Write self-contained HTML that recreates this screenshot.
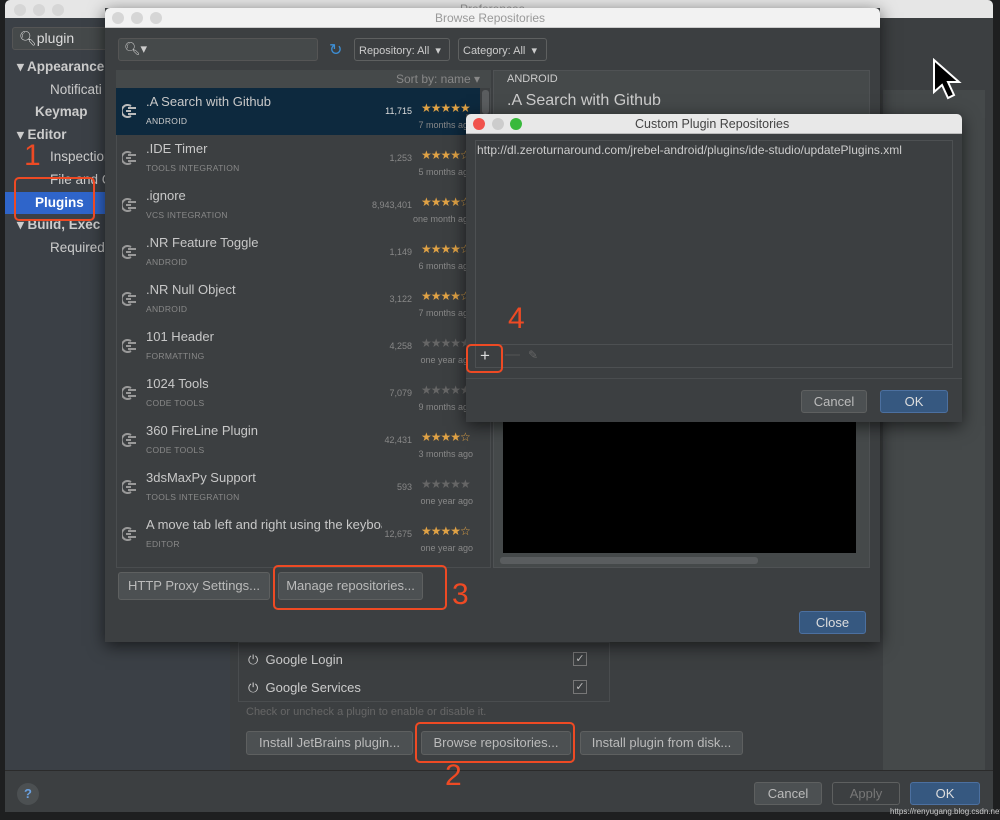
<!DOCTYPE html>
<html><head><style>
*{margin:0;padding:0;box-sizing:border-box}
body{width:1000px;height:820px;background:#1e1f20;position:relative;overflow:hidden;font-family:"Liberation Sans",sans-serif;color:#bbbbbb;font-size:13px}
.a{position:absolute;white-space:nowrap}
.btn{position:absolute;background:#4c5052;border:1px solid #5e6060;border-radius:3px;color:#bbb;font-size:13px;text-align:center;white-space:nowrap}
.blue{background:#365880;border-color:#4c70a0;color:#ddd}
.red{position:absolute;border:2px solid #ee4a24;border-radius:5px}
.num{position:absolute;color:#ee4a24;font-size:30px;font-weight:300}
.row{position:absolute;left:116px;width:364px;height:47px}
.row .t{position:absolute;left:30px;top:6px;font-size:13px;color:#c8c8c8;white-space:nowrap}
.row .c{position:absolute;left:30px;top:28px;font-size:8.5px;color:#888;letter-spacing:.3px;white-space:nowrap}
.row .n{position:absolute;right:68px;top:18px;font-size:9px;color:#888}
.row .s{position:absolute;left:305px;top:13px;font-size:12px;letter-spacing:-1px;color:#e0a245;white-space:nowrap}
.row .s.g{color:#666}
.row .d{position:absolute;right:7px;top:32px;font-size:9px;color:#888;white-space:nowrap}
.plug{position:absolute;left:6px;top:16px;width:14px;height:14px}
.dots span{position:absolute;width:12px;height:12px;border-radius:6px;background:#d6d6d6;top:4px}
</style></head><body>
<div class="a" style="left:5px;top:0;width:988px;height:18px;background:#e6e6e6;border-radius:5px 5px 0 0"></div>
<div class="a" style="left:460px;top:2px;color:#999;font-size:12px">Preferences</div>
<div class="a" style="left:5px;top:18px;width:225px;height:752px;background:#3b4046"></div>
<div class="a" style="left:230px;top:18px;width:763px;height:752px;background:#3c3f41"></div>
<div class="a" style="left:883px;top:90px;width:102px;height:680px;background:#45494a"></div>
<div class="a" style="left:5px;top:770px;width:988px;height:42px;background:#3c3f41;border-top:1px solid #2b2b2b"></div>
<div class="dots"><span style="left:14px;top:4px"></span><span style="left:33px"></span><span style="left:52px"></span></div>
<div class="a" style="left:12px;top:27px;width:100px;height:23px;border:1px solid #555;background:#45494a;border-radius:3px;color:#ddd;font-size:14px;padding:2px 6px">🔍︎plugin</div>
<div class="a" style="left:17px;top:56px;font-size:13.5px;line-height:22.6px;font-weight:bold;color:#ccc">
▾ Appearance<br><span style="font-weight:normal;padding-left:33px">Notificati</span><br><span style="padding-left:18px">Keymap</span><br>▾ Editor<br><span style="font-weight:normal;padding-left:33px">Inspection</span><br><span style="font-weight:normal;padding-left:33px">File and C</span></div>
<div class="a" style="left:5px;top:192px;width:225px;height:22px;background:#2f65ca"></div>
<div class="a" style="left:35px;top:195px;font-weight:bold;color:#fff;font-size:13.5px">Plugins</div>
<div class="a" style="left:17px;top:214px;font-size:13.5px;line-height:22.6px;font-weight:bold;color:#ccc">▾ Build, Exec<br><span style="font-weight:normal;padding-left:33px">Required</span></div>
<div class="a" style="left:238px;top:642px;width:372px;height:60px;border:1px solid #4a4d4f;background:#3c3f41"></div>
<div class="a" style="left:248px;top:652px;color:#ccc">⏻&nbsp; Google Login</div>
<div class="a" style="left:248px;top:680px;color:#ccc">⏻&nbsp; Google Services</div>
<div class="a" style="left:573px;top:652px;width:14px;height:14px;border:1px solid #777;font-size:11px;line-height:12px;text-align:center">✓</div>
<div class="a" style="left:573px;top:680px;width:14px;height:14px;border:1px solid #777;font-size:11px;line-height:12px;text-align:center">✓</div>
<div class="a" style="left:246px;top:706px;font-size:11px;color:#666">Check or uncheck a plugin to enable or disable it.</div>
<div class="btn" style="left:246px;top:731px;width:167px;height:24px;line-height:22px">Install JetBrains plugin...</div>
<div class="btn" style="left:421px;top:731px;width:150px;height:24px;line-height:22px">Browse repositories...</div>
<div class="btn" style="left:580px;top:731px;width:163px;height:24px;line-height:22px">Install plugin from disk...</div>
<div class="a" style="left:17px;top:783px;width:22px;height:22px;border-radius:11px;background:#4c5052;color:#6aa0e0;font-weight:bold;text-align:center;line-height:22px">?</div>
<div class="btn" style="left:754px;top:782px;width:68px;height:23px;line-height:21px">Cancel</div>
<div class="btn" style="left:832px;top:782px;width:68px;height:23px;line-height:21px;background:#3c3f41;color:#777">Apply</div>
<div class="btn blue" style="left:910px;top:782px;width:70px;height:23px;line-height:21px">OK</div>
<div class="a" style="left:890px;top:807px;font-size:8px;color:#ccc">https://renyugang.blog.csdn.net</div>

<div class="a" style="left:105px;top:8px;width:775px;height:634px;background:#3c3f41;box-shadow:0 4px 16px rgba(0,0,0,.6)"></div>
<div class="a" style="left:105px;top:8px;width:775px;height:20px;background:#f2f2f2;border-radius:5px 5px 0 0;border-bottom:1px solid #ccc"></div>
<div class="dots"><span style="left:112px;top:12px"></span><span style="left:131px;top:12px"></span><span style="left:150px;top:12px"></span></div>
<div class="a" style="left:435px;top:11px;color:#999;font-size:12px">Browse Repositories</div>
<div class="a" style="left:118px;top:38px;width:200px;height:23px;background:#45494a;border:1px solid #555;border-radius:3px;color:#ccc;padding:2px 5px">🔍︎▾</div>
<div class="a" style="left:329px;top:40px;color:#3d8fd6;font-size:16px">↻</div>
<div class="a" style="left:354px;top:38px;width:96px;height:23px;border:1px solid #5e6060;border-radius:3px;font-size:11px;padding:5px 4px;color:#ccc">Repository: All &nbsp;▾</div>
<div class="a" style="left:458px;top:38px;width:89px;height:23px;border:1px solid #5e6060;border-radius:3px;font-size:11px;padding:5px 4px;color:#ccc">Category: All &nbsp;▾</div>
<div class="a" style="left:116px;top:70px;width:375px;height:498px;background:#3c3f41;border:1px solid #4a4d4f"></div>
<div class="a" style="left:116px;top:70px;width:375px;height:18px;background:#45494a"></div>
<div class="a" style="left:396px;top:72px;color:#888;font-size:12px">Sort by: name ▾</div>
<div class="a" style="left:116px;top:88px;width:364px;height:47px;background:#0d293e"></div>
<div class="a" style="left:482px;top:90px;width:7px;height:24px;background:#5a5d5f;border-radius:3px"></div>

<div class="row" style="top:88px"><svg class="plug"><path d="M9 2A6 6 0 1 0 9 12M6 4h8M6 10h8M4 7h5" stroke="#bbb" stroke-width="2" fill="none"/></svg><div class="t">.A Search with Github</div><div class="c" style="color:#ccc">ANDROID</div><div class="n" style="color:#ddd">11,715</div><div class="s">★★★★★</div><div class="d">7 months ago</div></div>
<div class="row" style="top:135px"><svg class="plug"><path d="M9 2A6 6 0 1 0 9 12M6 4h8M6 10h8M4 7h5" stroke="#999" stroke-width="2" fill="none"/></svg><div class="t">.IDE Timer</div><div class="c">TOOLS INTEGRATION</div><div class="n">1,253</div><div class="s">★★★★☆</div><div class="d">5 months ago</div></div>
<div class="row" style="top:182px"><svg class="plug"><path d="M9 2A6 6 0 1 0 9 12M6 4h8M6 10h8M4 7h5" stroke="#999" stroke-width="2" fill="none"/></svg><div class="t">.ignore</div><div class="c">VCS INTEGRATION</div><div class="n">8,943,401</div><div class="s">★★★★☆</div><div class="d">one month ago</div></div>
<div class="row" style="top:229px"><svg class="plug"><path d="M9 2A6 6 0 1 0 9 12M6 4h8M6 10h8M4 7h5" stroke="#999" stroke-width="2" fill="none"/></svg><div class="t">.NR Feature Toggle</div><div class="c">ANDROID</div><div class="n">1,149</div><div class="s">★★★★☆</div><div class="d">6 months ago</div></div>
<div class="row" style="top:276px"><svg class="plug"><path d="M9 2A6 6 0 1 0 9 12M6 4h8M6 10h8M4 7h5" stroke="#999" stroke-width="2" fill="none"/></svg><div class="t">.NR Null Object</div><div class="c">ANDROID</div><div class="n">3,122</div><div class="s">★★★★☆</div><div class="d">7 months ago</div></div>
<div class="row" style="top:323px"><svg class="plug"><path d="M9 2A6 6 0 1 0 9 12M6 4h8M6 10h8M4 7h5" stroke="#999" stroke-width="2" fill="none"/></svg><div class="t">101 Header</div><div class="c">FORMATTING</div><div class="n">4,258</div><div class="s g">★★★★★</div><div class="d">one year ago</div></div>
<div class="row" style="top:370px"><svg class="plug"><path d="M9 2A6 6 0 1 0 9 12M6 4h8M6 10h8M4 7h5" stroke="#999" stroke-width="2" fill="none"/></svg><div class="t">1024 Tools</div><div class="c">CODE TOOLS</div><div class="n">7,079</div><div class="s g">★★★★★</div><div class="d">9 months ago</div></div>
<div class="row" style="top:417px"><svg class="plug"><path d="M9 2A6 6 0 1 0 9 12M6 4h8M6 10h8M4 7h5" stroke="#999" stroke-width="2" fill="none"/></svg><div class="t">360 FireLine Plugin</div><div class="c">CODE TOOLS</div><div class="n">42,431</div><div class="s">★★★★☆</div><div class="d">3 months ago</div></div>
<div class="row" style="top:464px"><svg class="plug"><path d="M9 2A6 6 0 1 0 9 12M6 4h8M6 10h8M4 7h5" stroke="#999" stroke-width="2" fill="none"/></svg><div class="t">3dsMaxPy Support</div><div class="c">TOOLS INTEGRATION</div><div class="n">593</div><div class="s g">★★★★★</div><div class="d">one year ago</div></div>
<div class="row" style="top:511px"><svg class="plug"><path d="M9 2A6 6 0 1 0 9 12M6 4h8M6 10h8M4 7h5" stroke="#999" stroke-width="2" fill="none"/></svg><div class="t" style="width:236px;overflow:hidden">A move tab left and right using the keyboard</div><div class="c">EDITOR</div><div class="n">12,675</div><div class="s">★★★★☆</div><div class="d">one year ago</div></div>

<div class="a" style="left:493px;top:70px;width:377px;height:498px;background:#45494a;border:1px solid #4f5254"></div>
<div class="a" style="left:507px;top:73px;font-size:11px;color:#ccc">ANDROID</div>
<div class="a" style="left:507px;top:92px;font-size:16px;color:#ccc">.A Search with Github</div>
<div class="a" style="left:503px;top:422px;width:353px;height:131px;background:#000"></div>
<div class="a" style="left:500px;top:557px;width:258px;height:7px;background:#5a5d5f;border-radius:3px"></div>
<div class="btn" style="left:118px;top:572px;width:152px;height:28px;line-height:26px">HTTP Proxy Settings...</div>
<div class="btn" style="left:278px;top:572px;width:145px;height:28px;line-height:26px">Manage repositories...</div>
<div class="btn blue" style="left:799px;top:611px;width:67px;height:23px;line-height:21px">Close</div>

<div class="a" style="left:466px;top:114px;width:496px;height:308px;background:#3c3f41;box-shadow:0 4px 16px rgba(0,0,0,.6)"></div>
<div class="a" style="left:466px;top:114px;width:496px;height:20px;background:#e8e8e8;border-radius:5px 5px 0 0;border-bottom:1px solid #bbb"></div>
<div class="a" style="left:473px;top:118px;width:12px;height:12px;border-radius:6px;background:#f0524c"></div>
<div class="a" style="left:492px;top:118px;width:12px;height:12px;border-radius:6px;background:#ccc"></div>
<div class="a" style="left:510px;top:118px;width:12px;height:12px;border-radius:6px;background:#38b93c"></div>
<div class="a" style="left:635px;top:117px;color:#444;font-size:12.5px">Custom Plugin Repositories</div>
<div class="a" style="left:475px;top:140px;width:478px;height:228px;border:1px solid #4d5052;background:#3c3f41"></div>
<div class="a" style="left:476px;top:344px;width:476px;height:1px;background:#4d5052"></div>
<div class="a" style="left:477px;top:143px;font-size:12px;color:#ccc">http://dl.zeroturnaround.com/jrebel-android/plugins/ide-studio/updatePlugins.xml</div>
<div class="a" style="left:480px;top:346px;font-size:17px;color:#ddd">+</div>
<div class="a" style="left:505px;top:346px;font-size:15px;color:#555">—</div>
<div class="a" style="left:528px;top:348px;font-size:12px;color:#666">✎</div>
<div class="a" style="left:466px;top:378px;width:496px;height:1px;background:#4a4d4f"></div>
<div class="btn" style="left:801px;top:390px;width:66px;height:23px;line-height:21px">Cancel</div>
<div class="btn blue" style="left:880px;top:390px;width:68px;height:23px;line-height:21px">OK</div>

<div class="red" style="left:14px;top:177px;width:81px;height:44px"></div>
<div class="num" style="left:24px;top:139px">1</div>
<div class="red" style="left:273px;top:565px;width:174px;height:45px"></div>
<div class="num" style="left:452px;top:578px">3</div>
<div class="red" style="left:466px;top:344px;width:37px;height:29px"></div>
<div class="num" style="left:508px;top:302px">4</div>
<div class="red" style="left:415px;top:722px;width:160px;height:41px"></div>
<div class="num" style="left:445px;top:759px">2</div>

<svg class="a" style="left:930px;top:58px" width="34" height="46"><path d="M4 2 L4 34 L12 27 L18 40 L24 37 L18 24 L29 24 Z" fill="#000" stroke="#fff" stroke-width="2"/></svg>
</body></html>
